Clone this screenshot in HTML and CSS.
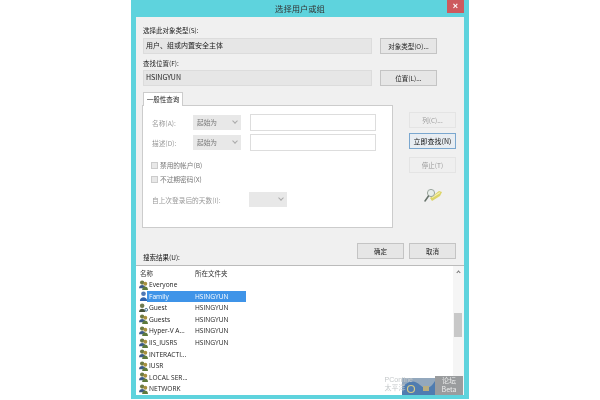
FILE: index.html
```html
<!DOCTYPE html>
<html lang="zh">
<head>
<meta charset="utf-8">
<title>选择用户或组</title>
<link rel="stylesheet" href="styles.css">
</head>
<body>
<div class="window">
  <header class="titlebar">
    <span class="title">选择用户或组</span>
    <span class="close">×</span>
  </header>
  <main class="client">
    <div class="top">
      <label class="lbl">选择此对象类型(S):</label>
      <div class="row">
        <div class="field">用户、组或内置安全主体</div>
        <button class="btn side">对象类型(O)...</button>
      </div>
      <label class="lbl second">查找位置(F):</label>
      <div class="row">
        <div class="field">HSINGYUN</div>
        <button class="btn side">位置(L)...</button>
      </div>
    </div>
    <div class="query">
      <div class="tabarea">
        <div class="tab">一般性查询</div>
        <div class="panel">
          <div class="frow">
            <span class="flabel">名称(A):</span>
            <span class="combo">起始为<i class="chev"></i></span>
            <span class="input"></span>
          </div>
          <div class="frow">
            <span class="flabel">描述(D):</span>
            <span class="combo">起始为<i class="chev"></i></span>
            <span class="input"></span>
          </div>
          <div class="check first"><i class="box"></i>禁用的帐户(B)</div>
          <div class="check"><i class="box"></i>不过期密码(X)</div>
          <div class="days">
            <span class="dlabel">自上次登录后的天数(I):</span>
            <span class="combo small"><i class="chev"></i></span>
          </div>
        </div>
      </div>
      <div class="actions">
        <button class="btn act off">列(C)...</button>
        <button class="btn act primary">立即查找(N)</button>
        <button class="btn act off">停止(T)</button>
        <svg class="finder" width="18" height="15" viewBox="0 0 18 15">
          <path d="M6 10 L15 3 L18 4 L16 8 L8 13 Z" fill="#dcd466"/>
          <path d="M8 9.500 L16 4.500" stroke="#f4f0b0" stroke-width="1.200"/>
          <circle cx="7" cy="5" r="3.600" fill="#e8eeea" stroke="#9aa59d" stroke-width="1"/>
          <path d="M4.500 8 L1 13" stroke="#66726a" stroke-width="1.500" stroke-linecap="round"/>
        </svg>
      </div>
    </div>
    <div class="okrow">
      <span class="lbl results">搜索结果(U):</span>
      <div class="okbtns">
        <button class="btn ok">确定</button>
        <button class="btn ok">取消</button>
      </div>
    </div>
    <section class="list">
      <div class="cols">
        <div class="head"><span class="c1">名称</span><span class="c2">所在文件夹</span></div>
        <div class="item"><svg class="ico"><use href="#group"/></svg><span class="c1">Everyone</span></div>
        <div class="item"><svg class="ico"><use href="#user"/></svg><span class="c1 hl">Family</span><span class="c2 hl">HSINGYUN</span></div>
        <div class="item"><svg class="ico"><use href="#guest"/></svg><span class="c1">Guest</span><span class="c2">HSINGYUN</span></div>
        <div class="item"><svg class="ico"><use href="#group"/></svg><span class="c1">Guests</span><span class="c2">HSINGYUN</span></div>
        <div class="item"><svg class="ico"><use href="#group"/></svg><span class="c1">Hyper-V A...</span><span class="c2">HSINGYUN</span></div>
        <div class="item"><svg class="ico"><use href="#group"/></svg><span class="c1">IIS_IUSRS</span><span class="c2">HSINGYUN</span></div>
        <div class="item"><svg class="ico"><use href="#group"/></svg><span class="c1">INTERACTI...</span></div>
        <div class="item"><svg class="ico"><use href="#group"/></svg><span class="c1">IUSR</span></div>
        <div class="item"><svg class="ico"><use href="#group"/></svg><span class="c1">LOCAL SER...</span></div>
        <div class="item"><svg class="ico"><use href="#group"/></svg><span class="c1">NETWORK</span></div>
      </div>
      <div class="scroll"><span class="arrow"></span><span class="thumb"></span></div>
      <div class="mark">
        <svg class="mark-logo" width="33" height="17" viewBox="0 0 33 17">
          <rect width="33" height="17" fill="#4f7cb0"/>
          <path d="M0 9 Q10 -1 18 7 T33 3 V0 H0 Z" fill="#93a8bd"/>
          <circle cx="9" cy="11" r="3.500" fill="none" stroke="#d3c98a" stroke-width="1.200"/>
          <rect x="21" y="8" width="6" height="5" fill="#b8ad80"/>
        </svg>
        <span class="mark-b">论坛<br>Beta</span>
        <span class="mark-a">PConline<br>太平洋</span>
      </div>
    </section>
  </main>
</div>
<svg class="defs" width="0" height="0">
  <defs>
    <symbol id="user" viewBox="0 0 10 11">
      <circle cx="5" cy="3" r="2.600" fill="#4f78b4"/>
      <path d="M1 11 C1 5.500 9 5.500 9 11 Z" fill="#2f62ad"/>
    </symbol>
    <symbol id="guest" viewBox="0 0 10 11">
      <circle cx="3.500" cy="3" r="2.500" fill="#6f7a50"/>
      <path d="M0 10 C0 5 7 5 7 10 Z" fill="#46533a"/>
      <path d="M8 6 a1.300 1.300 0 1 1 0 3 a1.300 1.300 0 1 1 0-3" fill="none" stroke="#3d6688" stroke-width="1.100"/>
    </symbol>
    <symbol id="group" viewBox="0 0 10 11">
      <circle cx="3.500" cy="2.800" r="2.400" fill="#6d7a44"/>
      <circle cx="7" cy="4" r="2.200" fill="#a8913f"/>
      <path d="M0 9 C0 4.500 7 4.500 7 9 Z" fill="#3c5a88"/>
      <path d="M3.500 11 C3.500 6 10 6 10 11 Z" fill="#5e7a3c"/>
    </symbol>
  </defs>
</svg>
</body>
</html>
```
FILE: styles.css
```css
* { box-sizing: border-box; }
html, body { margin: 0; padding: 0; background: #fff; }
body { width: 600px; height: 400px; overflow: hidden; font-family: "Noto Sans CJK SC", "Liberation Sans", sans-serif; color: #222; }
.defs { position: absolute; }
.window { margin-left: 131px; width: 338px; height: 399px; background: #5ed3dd; padding: 0 5px 4px; display: flex; flex-direction: column; filter: blur(0.3px); }
.titlebar { height: 17px; flex: none; display: flex; justify-content: center; align-items: center; position: relative; }
.title { font-size: 8.300px; color: #333; line-height: 17px; }
.close { position: absolute; right: 0; top: 0; width: 17px; height: 13px; background: #cd5a5e; color: #fff; font: bold 9px/12px "Liberation Sans", sans-serif; text-align: center; }
.client { flex: 1; background: #f0f0f0; display: flex; flex-direction: column; min-height: 0; }
.top { padding: 7px 0 0 7px; }
.lbl { display: block; font-size: 6.500px; line-height: 12px; color: #222; }
.second { margin-top: 3px; }
.row { display: flex; gap: 8px; margin-top: 2px; }
.row + .second + .row { margin-top: 1px; }
.field { width: 229px; height: 16px; background: #e6e6e6; border: 1px solid #dcdcdc; font-size: 7px; line-height: 12px; padding-left: 2px; color: #222; }
.btn { font-family: inherit; font-size: 6.500px; color: #222; background: #e6e6e6; border: 1px solid #c4c4c4; padding: 0; line-height: 1; display: block; }
.side { width: 57px; height: 16px; }
.query { display: flex; margin: 6px 0 0 6px; }
.tabarea { width: 251px; flex: none; }
.tab { width: 40px; height: 14px; margin-left: 1px; background: #fff; border: 1px solid #ccc; border-bottom: 0; font-size: 6.500px; line-height: 13px; text-align: center; position: relative; z-index: 1; margin-bottom: -1px; }
.panel { height: 123px; background: #fff; border: 1px solid #ccc; padding: 8px 0 0 9px; font-size: 6.700px; }
.frow { display: flex; align-items: center; height: 17px; margin-bottom: 3px; }
.flabel { width: 41px; color: #999; flex: none; }
.combo { width: 48px; height: 15px; background: #e8e8e8; color: #777; line-height: 14px; padding-left: 4px; position: relative; flex: none; }
.chev { position: absolute; right: 4px; top: 4px; width: 4px; height: 4px; border: solid #aaa; border-width: 0 1px 1px 0; transform: rotate(45deg); }
.input { width: 126px; height: 17px; margin-left: 9px; background: #fff; border: 1px solid #ddd; flex: none; }
.check { display: flex; align-items: center; height: 14px; color: #777; }
.check.first { margin-top: 7px; }
.box { width: 7px; height: 7px; background: #e8e8e8; border: 1px solid #ccc; margin: 0 2px 0 -1px; flex: none; }
.days { display: flex; align-items: center; margin-top: 6px; }
.dlabel { width: 97px; color: #999; flex: none; }
.combo.small { width: 38px; }
.actions { display: flex; flex-direction: column; align-items: flex-start; padding: 20px 0 0 16px; }
.act { width: 47px; height: 16px; margin-bottom: 5px; }
.off { background: #efefef; border-color: #e4e4e4; color: #999; }
.primary { border-color: #7aa7cf; background: #e8edf2; color: #111; font-size: 7px; margin-bottom: 8px; }
.finder { margin: 10px 0 0 15px; }
.okrow { display: flex; justify-content: space-between; align-items: flex-end; height: 37px; padding: 0 8px 0 7px; }
.results { color: #111; margin-bottom: 2px; }
.okbtns { display: flex; gap: 5px; margin-bottom: 6px; }
.ok { width: 47px; height: 16px; }
.list { flex: 1; min-height: 0; display: flex; background: #fff; border-top: 1px solid #bbb; position: relative; overflow: hidden; }
.cols { flex: 1; padding-left: 3px; font-size: 6.500px; min-width: 0; }
.head { display: flex; height: 13px; line-height: 14px; color: #333; width: 107px; padding-left: 1px; }
.item { display: flex; align-items: center; height: 11.550px; font-family: "Open Sans", "Liberation Sans", sans-serif; font-size: 6.600px; color: #222; white-space: nowrap; }
.ico { width: 9px; height: 10px; flex: none; margin-right: -1px; }
.c1 { width: 48px; padding-left: 2px; flex: none; }
.head .c1 { width: 55px; padding-left: 0; }
.c2 { width: 51px; flex: none; }
.hl { background: #3f94e8; color: #fff; height: 11px; line-height: 11px; }
.scroll { width: 11px; flex: none; background: #f5f5f5; position: relative; }
.arrow { position: absolute; left: 4px; top: 5px; width: 3px; height: 3px; border: solid #777; border-width: 1px 0 0 1px; transform: rotate(45deg); }
.thumb { position: absolute; left: 1px; top: 47px; width: 8px; height: 24px; background: #c8c8c8; }
.mark { position: absolute; right: 1px; bottom: 0; display: flex; align-items: flex-end; }
.mark-a { position: absolute; right: 50px; bottom: 3px; font: 7px/8px "Liberation Sans", "Noto Sans CJK SC", sans-serif; color: #c4c8ca; white-space: nowrap; }
.mark-logo { display: block; }
.mark-b { background: #9a9c9e; color: #eceded; font: 7px/9px "Noto Sans CJK SC", sans-serif; width: 28px; height: 19px; text-align: center; }
```
